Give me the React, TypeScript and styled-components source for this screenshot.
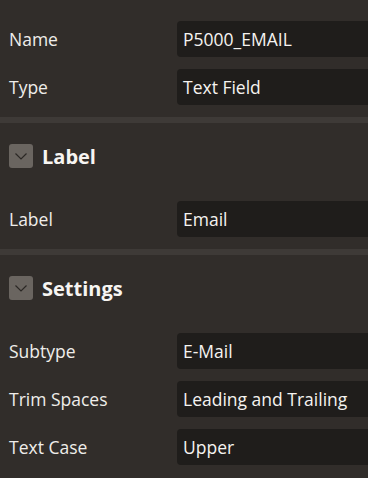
import React from "react";
import styled, { createGlobalStyle } from "styled-components";

const Global = createGlobalStyle`
  html, body { margin: 0; padding: 0; background: #312d2a; overflow: hidden; }
  body { font-family: "Open Sans", "Noto Sans", sans-serif; }
`;

const Page = styled.div`
  width: 420px;
  height: 478px;
  background: #312d2a;
  display: flex;
  flex-direction: column;
`;

const Group = styled.div<{ $top?: number }>`
  display: flex;
  flex-direction: column;
  padding: ${(p) => p.$top ?? 6}px 0 6px 0;
`;

const Row = styled.div`
  display: grid;
  grid-template-columns: 168px 1fr;
  align-items: center;
  padding: 6px 0 6px 9px;
  height: 36px;
`;

const FieldLabel = styled.div`
  color: #efedea;
  font-size: 17.5px;
  line-height: 36px;
  white-space: nowrap;
`;

const Field = styled.div`
  background: #1f1d1b;
  border-radius: 4px;
  height: 36px;
  padding: 0 6px;
  color: #f5f3f0;
  font-size: 17.5px;
  line-height: 36px;
  white-space: nowrap;
`;

const Divider = styled.div`
  height: 6px;
  background: #3e3a37;
  flex-shrink: 0;
`;

const Heading = styled.div`
  display: flex;
  align-items: center;
  gap: 9px;
  height: 66px;
  padding-left: 9px;
`;

const Toggle = styled.div`
  width: 24px;
  height: 24px;
  border-radius: 3px;
  background: #6a6560;
  display: flex;
  align-items: center;
  justify-content: center;
`;

const HeadingText = styled.div`
  color: #f7f5f2;
  font-size: 20px;
  font-weight: 700;
`;

const Chevron = () => (
  <svg width="14" height="14" viewBox="0 0 14 14">
    <path d="M1.5 4.5 L7 10 L12.5 4.5" fill="none" stroke="#2b2825" strokeWidth="1.2" />
  </svg>
);

const Section = ({ title }: { title: string }) => (
  <Heading>
    <Toggle>
      <Chevron />
    </Toggle>
    <HeadingText>{title}</HeadingText>
  </Heading>
);

const Prop = ({ label, value }: { label: string; value: string }) => (
  <Row>
    <FieldLabel>{label}</FieldLabel>
    <Field>{value}</Field>
  </Row>
);

export default function App() {
  return (
    <>
      <Global />
      <Page>
        <Group $top={15}>
          <Prop label="Name" value="P5000_EMAIL" />
          <Prop label="Type" value="Text Field" />
        </Group>
        <Divider />
        <Section title="Label" />
        <Group>
          <Prop label="Label" value="Email" />
        </Group>
        <Divider />
        <Section title="Settings" />
        <Group>
          <Prop label="Subtype" value="E-Mail" />
          <Prop label="Trim Spaces" value="Leading and Trailing" />
          <Prop label="Text Case" value="Upper" />
        </Group>
      </Page>
    </>
  );
}
